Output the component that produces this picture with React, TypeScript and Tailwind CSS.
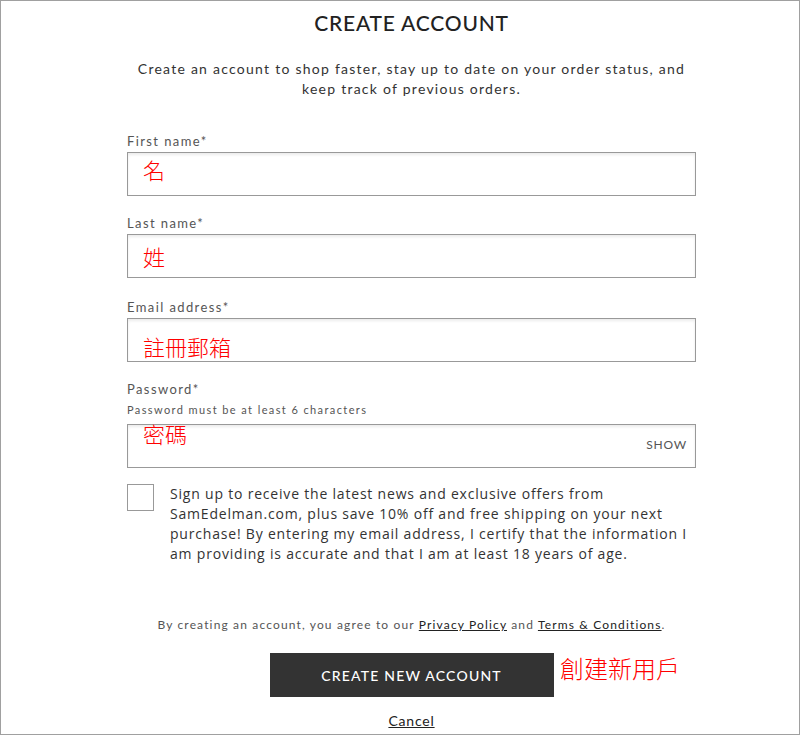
const fields = [
  { label: "First name*", note: "名", pt: "pt-[2px]", mt: "" },
  { label: "Last name*", note: "姓", pt: "pt-[7px]", mt: "mt-[17px]" },
  { label: "Email address*", note: "註冊郵箱", pt: "pt-[13px]", mt: "mt-[19px]" },
];

function Field({ label, note, pt, mt }: { label: string; note: string; pt: string; mt: string }) {
  return (
    <div className={`flex flex-col ${mt}`}>
      <label className="text-[13px] leading-5 tracking-[1.4px] text-[#555]">{label}</label>
      <div
        className={`mt-[1px] h-[44px] border border-[#999] bg-white pl-[15px] shadow-[inset_0_2px_3px_rgba(0,0,0,0.08)] ${pt}`}
      >
        <span className="cjk text-[22px] leading-7 text-[#ff0000]">{note}</span>
      </div>
    </div>
  );
}

export default function App() {
  return (
    <div className="h-[735px] w-[800px] overflow-hidden border border-[#a0a0a0] bg-white font-['Lato',sans-serif] text-[#333]">
      <style>{`.cjk{font-family:"Noto Sans CJK TC","Noto Sans CJK SC",sans-serif;font-weight:300}`}</style>
      <div className="ml-[126px] flex w-[569px] flex-col">
        <h1 className="mt-[8px] text-center text-[21px] font-medium leading-7 tracking-[0.8px] text-[#222]">
          CREATE ACCOUNT
        </h1>
        <p className="mx-[-30px] mt-[22px] text-center text-[14px] leading-5 tracking-[1.25px] text-[#333]">
          Create an account to shop faster, stay up to date on your order status, and
          <br />
          keep track of previous orders.
        </p>

        <div className="mt-[32px] flex flex-col">
          {fields.map((f) => (
            <Field key={f.label} {...f} />
          ))}
        </div>

        <div className="mt-[17px] flex flex-col">
          <label className="text-[13px] leading-5 tracking-[1.4px] text-[#555]">Password*</label>
          <span className="mt-[3px] text-[11px] leading-4 tracking-[1.4px] text-[#555]">
            Password must be at least 6 characters
          </span>
          <div className="mt-[6px] flex h-[44px] items-start justify-between border border-[#999] bg-white pl-[15px] pr-[8px] shadow-[inset_0_2px_3px_rgba(0,0,0,0.08)]">
            <span className="cjk mt-[-6px] text-[22px] leading-7 text-[#ff0000]">密碼</span>
            <span className="mt-[11px] text-[12px] tracking-[0.8px] text-[#555]">SHOW</span>
          </div>
        </div>

        <div className="mt-[16px] flex items-start gap-[16px]">
          <div className="h-[27px] w-[27px] shrink-0 border border-[#999] bg-white" />
          <p className="mt-0 w-[522px] font-['Open_Sans',sans-serif] text-[14px] leading-5 tracking-[0.8px] text-[#333]">
            Sign up to receive the latest news and exclusive offers from SamEdelman.com, plus save 10% off and free
            shipping on your next purchase! By entering my email address, I certify that the information I am providing
            is accurate and that I am at least 18 years of age.
          </p>
        </div>

        <p className="mx-[-20px] mt-[51px] text-center text-[12px] leading-5 tracking-[1.15px] text-[#555]">
          By creating an account, you agree to our{" "}
          <a className="text-[#222] underline">Privacy Policy</a> and{" "}
          <a className="text-[#222] underline">Terms &amp; Conditions</a>.
        </p>

        <div className="relative mt-[18px] flex justify-center">
          <button className="h-[44px] w-[284px] bg-[#333] text-[14px] font-medium tracking-[1.2px] text-white">
            CREATE NEW ACCOUNT
          </button>
          <span className="cjk absolute left-[433px] top-[1px] text-[24px] leading-7 text-[#ff0000]">創建新用戶</span>
        </div>

        <a className="mt-[14px] self-center text-[14px] leading-5 tracking-[0.8px] text-[#222] underline">Cancel</a>
      </div>
    </div>
  );
}
